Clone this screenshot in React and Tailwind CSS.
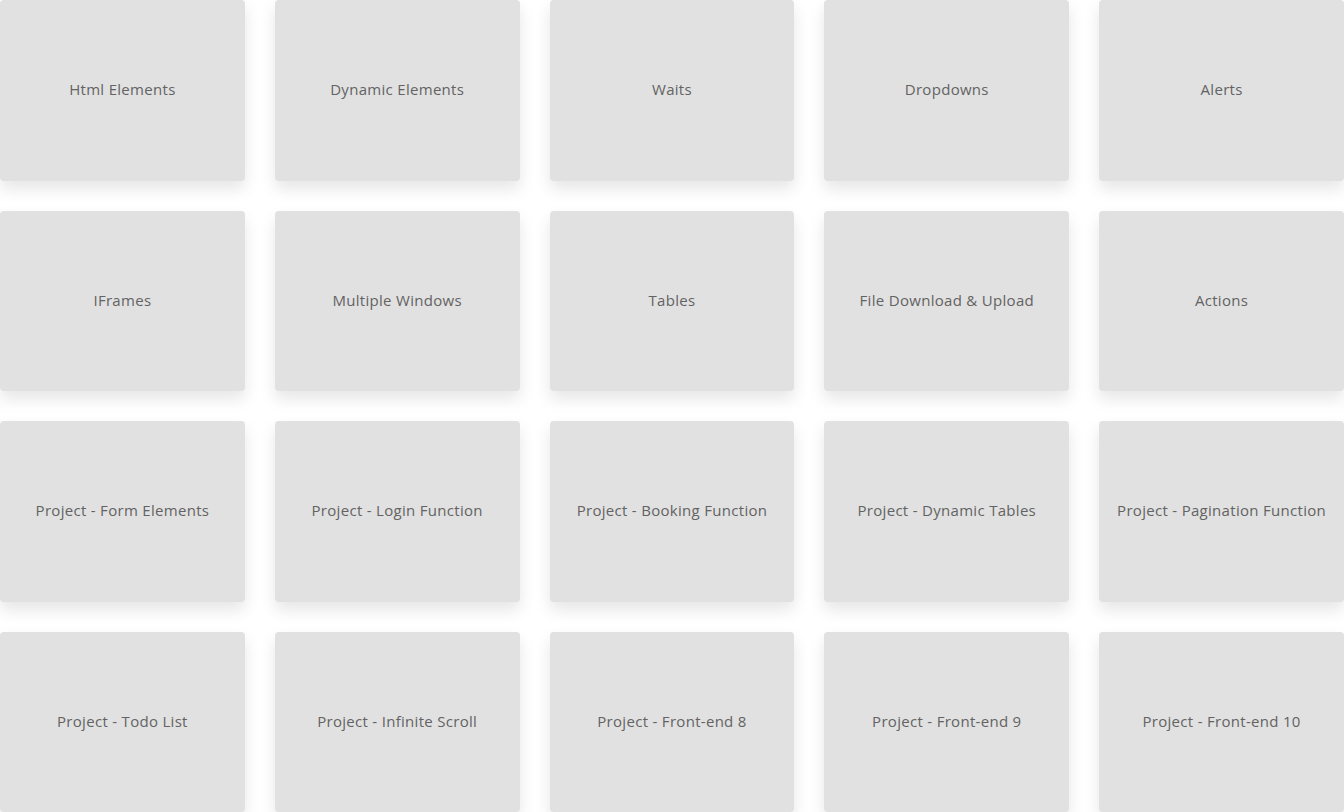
const items = [
  'Html Elements',
  'Dynamic Elements',
  'Waits',
  'Dropdowns',
  'Alerts',
  'IFrames',
  'Multiple Windows',
  'Tables',
  'File Download & Upload',
  'Actions',
  'Project - Form Elements',
  'Project - Login Function',
  'Project - Booking Function',
  'Project - Dynamic Tables',
  'Project - Pagination Function',
  'Project - Todo List',
  'Project - Infinite Scroll',
  'Project - Front-end 8',
  'Project - Front-end 9',
  'Project - Front-end 10',
]

export default function App() {
  return (
    <div className="h-[812px] w-full overflow-hidden bg-white font-['Open_Sans',sans-serif]">
      <div className="grid grid-cols-5 gap-[30px]">
        {items.map((label) => (
          <div
            key={label}
            className="flex h-[180.5px] items-center justify-center rounded-[4px] bg-[#e1e1e1] pb-[2px] shadow-[0_8px_16px_rgba(0,0,0,0.1)]"
          >
            <span className="text-[15px] tracking-[0.3px] text-[#636363]">{label}</span>
          </div>
        ))}
      </div>
    </div>
  )
}
